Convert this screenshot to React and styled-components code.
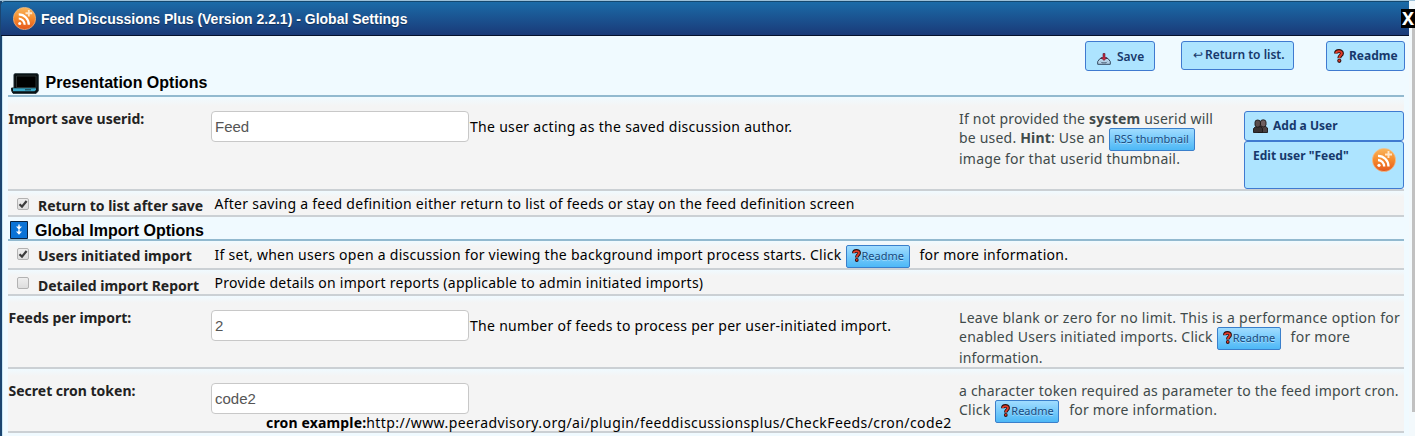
import React from 'react';
import styled, { createGlobalStyle } from 'styled-components';

const Global = createGlobalStyle`
  *, *::before, *::after { box-sizing: border-box; }
  body {
    margin: 0;
    overflow: hidden;
    background: #fff;
    font-family: "Noto Sans", "Open Sans", sans-serif;
    font-size: 14px;
    line-height: 20px;
    color: #000;
  }
`;

const Page = styled.div`
  display: flex;
  height: 436px;
  overflow: hidden;
  background: #f3f9fc;
  border-top: 1px solid #9cc0d8;
`;

const Popup = styled.div`
  width: 1409px;
  flex: none;
  height: 440px;
  border-left: 2px solid #1b4570;
  box-shadow: inset 1px 0 0 #c8e6f4;
  background: #f0faff;
`;

const TitleBar = styled.header`
  display: flex;
  align-items: center;
  height: 35px;
  margin-left: -1px;
  padding-left: 12px;
  border-top: 1px solid #14486f;
  border-bottom: 1px solid #04112c;
  border-radius: 4px 0 0 0;
  background: linear-gradient(#1b6ba8, #1a3a78);
  color: #fff;
  font: bold 14px/20px "Liberation Sans", Arial, sans-serif;
  text-shadow: 0 1px 1px rgba(0, 0, 0, 0.4);
  gap: 5px;
`;

const Close = styled.button`
  position: absolute;
  left: 1401px;
  top: 9px;
  display: flex;
  justify-content: center;
  width: 14px;
  height: 19px;
  padding: 0;
  border: 0;
  background: #000;
  color: #fff;
  font: bold 18px/19px "Noto Sans", sans-serif;
`;

const ScrollTrack = styled.div`
  flex: 1;
  display: flex;
  justify-content: flex-end;
  padding-top: 27px;
`;

const ScrollThumb = styled.div`
  width: 3px;
  height: 384px;
  background: #c1c1c1;
`;

const Toolbar = styled.div`
  display: flex;
  align-items: flex-start;
  height: 32px;
  padding: 5px 4px 0 1083px;
`;

const Button = styled.button`
  display: flex;
  align-items: ${p => p.$align || 'center'};
  gap: ${p => p.$gap || 4}px;
  width: ${p => p.$w}px;
  height: ${p => p.$h}px;
  margin: 0 0 0 ${p => p.$ml || 0}px;
  padding: ${p => p.$pad || '0'};
  border: 1px solid #3f7ad0;
  border-radius: 3px;
  background: #ade4ff;
  color: #17386b;
  font: ${p => p.$weight || 'bold'} 12px/16px "Noto Sans", sans-serif;
  white-space: nowrap;
  flex: none;
`;

const Arrow = styled.span`
  font-weight: normal;
  font-size: 12px;
`;

const Inline = styled.button`
  display: inline-flex;
  align-items: center;
  vertical-align: top;
  gap: 1px;
  width: ${p => p.$w}px;
  height: 23px;
  margin: ${p => p.$m || '0'};
  padding: 0 0 2px ${p => p.$pl || 4}px;
  border: 1px solid #3a7fcb;
  border-radius: 2px;
  background: linear-gradient(#a0dcff, #4db8f6);
  color: #174a7e;
  font: 11px/19px "Noto Sans", sans-serif;
  text-shadow: 0 1px 0 rgba(255, 255, 255, 0.4);
  white-space: nowrap;
`;

const Content = styled.main`
  width: 1396px;
  margin-left: 6px;
`;

const Heading = styled.h2`
  display: flex;
  align-items: center;
  height: ${p => p.$h}px;
  margin: 0;
  padding: ${p => p.$pad};
  gap: ${p => p.$gap}px;
  border-bottom: 2px solid #92b9cf;
  font: bold 16px/20px "Liberation Sans", Arial, sans-serif;
`;

const HeadingText = styled.span`
  padding: ${p => p.$pad};
`;

const Row = styled.section`
  display: flex;
  align-items: flex-start;
  height: ${p => p.$h}px;
  border-bottom: 2px solid #cbd0d4;
  background: linear-gradient(#f0faff, #f4f4f4 ${p => p.$fade || 6}px);
`;

const Label = styled.label`
  width: 203px;
  flex: none;
  padding: ${p => p.$top}px 0 0 0.5px;
  font-weight: bold;
  color: #222;
  white-space: nowrap;
`;

const Field = styled.div`
  width: 748px;
  flex: none;
  padding-top: ${p => p.$top}px;
`;

const InputLine = styled.div`
  display: flex;
  align-items: center;
  gap: 1px;
  white-space: nowrap;
  letter-spacing: ${p => p.$ls}px;
`;

const Input = styled.input`
  width: 258px;
  height: 31px;
  padding: 0 3px;
  border: 1px solid #c8c8c8;
  border-radius: 4px;
  background: #fff;
  color: #555;
  font: 15px/20px "Liberation Sans", Arial, sans-serif;
`;

const Example = styled.div`
  padding-left: 55px;
  margin-top: -1px;
  white-space: nowrap;
  letter-spacing: 0.42px;
  b { letter-spacing: 0.16px; }
`;

const Help = styled.div`
  flex: none;
  padding-top: ${p => p.$top}px;
  color: #404a4a;
`;

const HelpLine = styled.div`
  height: ${p => p.$h || 20}px;
  white-space: nowrap;
  letter-spacing: ${p => p.$ls}px;
`;

const Buttons = styled.div`
  width: 160px;
  margin: 14px 0 0 auto;
  display: flex;
  flex-direction: column;
`;

const CheckCell = styled.label`
  display: flex;
  align-items: flex-start;
  width: 207px;
  flex: none;
  padding-left: 9px;
  gap: 9px;
  font-weight: bold;
  color: #222;
  white-space: nowrap;
`;

const CheckText = styled.span`
  padding-top: ${p => p.$top}px;
`;

const Box = styled.span`
  display: flex;
  width: 12px;
  height: 12px;
  margin-top: ${p => p.$top}px;
  border: 1px solid #b2b2b2;
  border-radius: 2px;
  background: linear-gradient(#eee, #ddd);
`;

const Description = styled.div`
  padding-top: ${p => p.$top}px;
  margin-left: -0.5px;
  white-space: nowrap;
  letter-spacing: ${p => p.$ls}px;
`;

const Svg = styled.svg`
  display: block;
  flex: none;
  margin: ${p => p.$m || '0'};
`;

const FeedIcon = ({ size, id, m }) => (
  <Svg $m={m} width={size} height={size} viewBox="0 0 24 24">
    <defs>
      <linearGradient id={id} x1="0" y1="0" x2="0" y2="1">
        <stop offset="0" stopColor="#f9b65c" />
        <stop offset="0.5" stopColor="#f58a2c" />
        <stop offset="1" stopColor="#e5561c" />
      </linearGradient>
    </defs>
    <circle cx="12" cy="12" r="11.600" fill={`url(#${id})`} stroke="#f7c08a" strokeWidth=".7" />
    <g fill="none" stroke="#fff" strokeWidth="2.300">
      <path d="M6 12a6.500 6.500 0 0 1 6.200 6.500M6 7.800a10.500 10.500 0 0 1 10.500 10.700" />
    </g>
    <circle cx="7" cy="17.300" r="1.600" fill="#fff" />
    <path d="M16.500 3v7M13 6.500h7" stroke="#ffe6c8" strokeWidth="1.900" />
  </Svg>
);

const Question = ({ width = 10, height = 14, m }) => (
  <Svg $m={m} width={width} height={height} viewBox="0 0 10 14" preserveAspectRatio="none">
    <path d="M2 4.500C2 1.200 8 1.200 8 4.200 8 6.500 5.300 6.300 5.300 9.200" fill="none" stroke="#2b1010" strokeWidth="3.900" />
    <circle cx="5.300" cy="11.800" r="2.100" fill="#2b1010" />
    <path d="M2 4.300C2.300 1.600 7.800 1.600 7.800 4.200 7.800 6.300 5.300 6.300 5.300 9" fill="none" stroke="#e23b28" strokeWidth="2" />
    <circle cx="5.300" cy="11.700" r="1.100" fill="#e23b28" />
  </Svg>
);

const SaveIcon = () => (
  <Svg $m="4px 0 0" width="14" height="12" viewBox="0 0 14 12">
    <path d="M3 5.500h8l2.300 3v2.800H.7V8.500z" fill="#b5d3e8" stroke="#33485e" />
    <path d="M4 8.800l1 1h4l1-1" fill="none" stroke="#33485e" strokeWidth=".8" />
    <path d="M6 .5h2v4h2L7 7.500 4 4.500h2z" fill="#c9283c" stroke="#4f1730" strokeWidth=".6" />
  </Svg>
);

const LaptopIcon = () => (
  <Svg width="28" height="21" viewBox="0 0 28 21">
    <path d="M4 .8h22q1.200 0 1.200 1.200V18l-2 2.300H2L.5 17.500V15H3V2q0-1.200 1-1.200z" fill="#080c0e" stroke="#16252b" />
    <path d="M5.500 3h19.500v11.500H5.500z" fill="#000" stroke="#343c3e" strokeWidth=".8" />
    <path d="M2 15.300h23v1.700l-1.500 1.200H2z" fill="#3aa8c9" />
    <path d="M14 16.800h6" stroke="#15353f" />
  </Svg>
);

const ExpandIcon = () => (
  <Svg width="18" height="18" viewBox="0 0 18 18">
    <path d="M.5.500h17v17H.5z" fill="#0b73d6" stroke="#0a2340" />
    <path d="M8.300 3.500h1.400v2H12L9 8.800 6 5.500h2.300zM8.300 8.500h1.400v2H12L9 13.800 6 10.500h2.300z" fill="#fff" />
  </Svg>
);

const UsersIcon = () => (
  <Svg width="15" height="14" viewBox="0 0 15 14">
    <g stroke="#1c1717" strokeWidth=".9">
      <path d="M5 13.500V9l2-2h5l2.500 2v4.500z" fill="#4b4141" />
      <path d="M7.500 3q0-2.200 2.700-2.200T13 3v3q-1 2-2.800 2T7.500 6z" fill="#6e5e5e" />
      <path d="M.5 13.500V9.500l2-1.800h5l2 1.800v4z" fill="#393232" />
      <path d="M2 3.200Q2 1 4.700 1t2.700 2.200v3q-.8 2-2.700 2T2 6.200z" fill="#5a4d4d" />
    </g>
  </Svg>
);

const CheckMark = () => (
  <Svg width="10" height="10" viewBox="0 0 10 10">
    <path d="M1.500 5.200 4 7.600 8.600 2" fill="none" stroke="#3c3c3c" strokeWidth="2.200" />
  </Svg>
);

const ReadmeLink = ({ m, w = 64 }) => (
  <Inline $w={w} $m={m} $pl={5}><Question width={9} height={13} />Readme</Inline>
);

const CheckRow = ({ h, label, checked, boxTop, labelTop, textTop, ls, children }) => (
  <Row $h={h}>
    <CheckCell>
      <Box $top={boxTop}>{checked && <CheckMark />}</Box>
      <CheckText $top={labelTop}>{label}</CheckText>
    </CheckCell>
    <Description $top={textTop} $ls={ls}>{children}</Description>
  </Row>
);

export default function App() {
  return (
    <>
      <Global />
      <Page>
        <Popup>
          <TitleBar>
            <FeedIcon size={23} id="feedTitle" />
            Feed Discussions Plus (Version 2.2.1) - Global Settings
          </TitleBar>
          <Toolbar>
            <Button $w={70} $h={30} $pad="1px 0 0 11px" $gap={6} $weight={600}><SaveIcon />Save</Button>
            <Button $w={113} $h={29} $ml={26} $pad="0 0 2px 11px" $gap={2} $weight={600}><Arrow>↩</Arrow>Return to list.</Button>
            <Button $w={79} $h={30} $ml={32} $pad="0 0 0 7px" $gap={5}><Question />Readme</Button>
          </Toolbar>
          <Content>
            <Heading $h={29} $pad="4px 0 0 3px" $gap={6}>
              <LaptopIcon /><HeadingText $pad="0 0 2px 0.5px">Presentation Options</HeadingText>
            </Heading>
            <Row $h={94} $fade={9}>
              <Label $top={12}>Import save userid:</Label>
              <Field $top={14}>
                <InputLine $ls={0.3}><Input defaultValue="Feed" />The user acting as the saved discussion author.</InputLine>
              </Field>
              <Help $top={12}>
                <HelpLine $h={19} $ls={0.2}>If not provided the <b>system</b> userid will</HelpLine>
                <HelpLine $h={21} $ls={0.2}>be used. <b>Hint</b>: Use an <Inline $w={86}>RSS thumbnail</Inline></HelpLine>
                <HelpLine $ls={0.22}>image for that userid thumbnail.</HelpLine>
              </Help>
              <Buttons>
                <Button $w={160} $h={30} $pad="0 0 0 8px" $gap={5}><UsersIcon />Add a User</Button>
                <Button $w={160} $h={48} $align="flex-start" $pad="6px 7px 0 8px">
                  Edit user "Feed"<FeedIcon size={24} id="feedUser" m="0 0 0 auto" />
                </Button>
              </Buttons>
            </Row>
            <CheckRow h={26} label="Return to list after save" checked boxTop={7} labelTop={5} textTop={3} ls={0.26}>
              After saving a feed definition either return to list of feeds or stay on the feed definition screen
            </CheckRow>
            <Heading $h={24} $pad="3px 0 0 2px" $gap={7}>
              <ExpandIcon /><HeadingText $pad="2px 0 0">Global Import Options</HeadingText>
            </Heading>
            <CheckRow h={29} label="Users initiated import" checked boxTop={7} labelTop={5} textTop={4} ls={0.27}>
              If set, when users open a discussion for viewing the background import process starts. Click <ReadmeLink m="0 6px 0 0" /> for more information.
            </CheckRow>
            <CheckRow h={26} label="Detailed import Report" boxTop={7} labelTop={6} textTop={3} ls={0.24}>
              Provide details on import reports (applicable to admin initiated imports)
            </CheckRow>
            <Row $h={73} $fade={7}>
              <Label $top={12}>Feeds per import:</Label>
              <Field $top={14}>
                <InputLine $ls={0.29}><Input defaultValue="2" />The number of feeds to process per per user-initiated import.</InputLine>
              </Field>
              <Help $top={12}>
                <HelpLine $h={19} $ls={0.29}>Leave blank or zero for no limit. This is a performance option for</HelpLine>
                <HelpLine $h={21} $ls={0.25}>enabled Users initiated imports. Click <ReadmeLink m="0 6px 0 0" /> for more</HelpLine>
                <HelpLine $ls={0.15}>information.</HelpLine>
              </Help>
            </Row>
            <Row $h={64} $fade={7}>
              <Label $top={12}>Secret cron token:</Label>
              <Field $top={14}>
                <InputLine><Input defaultValue="code2" /></InputLine>
                <Example><b>cron example:</b>http://www.peeradvisory.org/ai/plugin/feeddiscussionsplus/CheckFeeds/cron/code2</Example>
              </Field>
              <Help $top={12}>
                <HelpLine $h={19} $ls={0.21}>a character token required as parameter to the feed import cron.</HelpLine>
                <HelpLine $ls={0.23}>Click <ReadmeLink m="0 6px 0 1px" /> for more information.</HelpLine>
              </Help>
            </Row>
          </Content>
        </Popup>
        <ScrollTrack><ScrollThumb /></ScrollTrack>
        <Close aria-label="Close">X</Close>
      </Page>
    </>
  );
}
